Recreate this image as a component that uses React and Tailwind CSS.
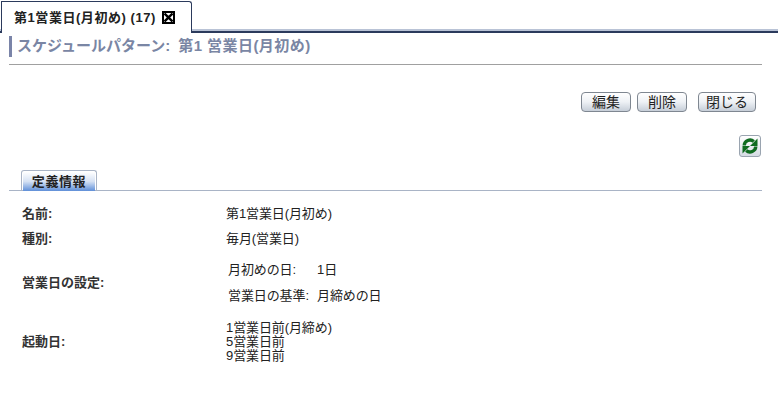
import React from 'react';

const Btn = ({ label, width, className = '' }) => (
  <button className={`h-[20px] ${width} ${className} rounded-[4px] border border-[#7f8791] bg-gradient-to-b from-[#ffffff] via-[#eef1f5] to-[#c6ced8] text-[14px] leading-[18px] text-[#222]`}>
    {label}
  </button>
);

const Row = ({ label, height, children }) => (
  <div className={`flex items-center ${height}`}>
    <div className="w-[217px] shrink-0 pl-[13px] text-[13px] font-bold text-[#333]">{label}</div>
    <div className="text-[13px] tracking-[-0.1px] text-[#222]">{children}</div>
  </div>
);

export default function App() {
  return (
    <div className="w-[778px] h-[416px] bg-white overflow-hidden font-['Liberation_Sans','Noto_Sans_CJK_JP',sans-serif]">
      {/* top tab strip */}
      <div className="h-[33px] pt-[1px] pl-[1px] border-b-2 border-[#2b3a5c] shadow-[inset_0_-2px_0_#b9c3d6] flex items-end">
        <div className="h-[32px] -mb-[2px] w-[191px] bg-white border border-b-0 border-[#2b3a5c] rounded-tr-[3px] flex items-center pl-[12px] gap-[6px] text-[13px] tracking-[0.55px] font-bold text-[#222]">
          <span>第1営業日(月初め) (17)</span>
          <span className="w-[13px] h-[13px] border-2 border-black flex items-center justify-center">
            <svg width="9" height="9" viewBox="0 0 9 9"><path d="M0.5 0.5L8.5 8.5M8.5 0.5L0.5 8.5" stroke="#000" strokeWidth="2.4" /></svg>
          </span>
        </div>
      </div>

      <div className="pl-[9px] pr-[16px]">
        <div className="mt-[3px] h-[29px] border-b border-[#a0a0a0]">
          <div className="h-[21px] border-l-[3px] border-[#7a84a8] pl-[5px] text-[15px] leading-[19px] font-bold text-[#7a86a4]">
            スケジュールパターン:<span className="ml-[8px] tracking-[0.45px]">第1 営業日(月初め)</span>
          </div>
        </div>

        <div className="mt-[27px] flex justify-end gap-[6px] pr-[6px]">
          <Btn label="編集" width="w-[50px]" />
          <Btn label="削除" width="w-[50px]" />
          <Btn label="閉じる" width="w-[58px]" className="ml-[5px]" />
        </div>

        <div className="mt-[23px] flex justify-end pr-[1px]">
          <div className="w-[22px] h-[22px] rounded-[3px] border border-[#9aa4b0] bg-gradient-to-b from-white to-[#d5dbe3] flex items-center justify-center">
            <svg width="18" height="18" viewBox="0 0 18 18">
              <path d="M3.2 8.5a5.8 5.8 0 0 1 9.6-4" fill="none" stroke="#0f6b1f" strokeWidth="3.4" />
              <path d="M16.5 1.5v7.5h-7.5z" fill="#0f6b1f" />
              <path d="M14.8 9.5a5.8 5.8 0 0 1-9.6 4" fill="none" stroke="#0f6b1f" strokeWidth="3.4" />
              <path d="M1.5 16.5v-7.5h7.5z" fill="#0f6b1f" />
            </svg>
          </div>
        </div>

        <div className="mt-[13px] h-[21px] border-b border-[#a9b4c6] pl-[12px] flex items-end">
          <div className="h-[21px] -mb-[1px] w-[76px] border border-b-0 border-[#a9b4c6] rounded-t-[3px] p-[1px] pb-0">
            <div className="h-full bg-gradient-to-b from-white via-[#d5e1f3] to-[#5f8fd8] text-center text-[13px] tracking-[0.6px] leading-[19px] font-bold text-[#222]">定義情報</div>
          </div>
        </div>

        <div className="mt-[10px]">
          <Row label="名前:" height="h-[25px]">第1営業日(月初め)</Row>
          <Row label="種別:" height="h-[25px]">毎月(営業日)</Row>
          <Row label="営業日の設定:" height="h-[64px]">
            <div className="pl-[2px]">
              <div className="h-[26px] leading-[26px] flex">
                <span className="w-[89px]">月初めの日:</span>
                <span>1日</span>
              </div>
              <div className="h-[26px] leading-[26px] flex">
                <span className="w-[89px]">営業日の基準:</span>
                <span>月締めの日</span>
              </div>
            </div>
          </Row>
          <Row label="起動日:" height="h-[54px]">
            <div className="leading-[14px]">
              <div>1営業日前(月締め)</div>
              <div>5営業日前</div>
              <div>9営業日前</div>
            </div>
          </Row>
        </div>
      </div>
    </div>
  );
}
